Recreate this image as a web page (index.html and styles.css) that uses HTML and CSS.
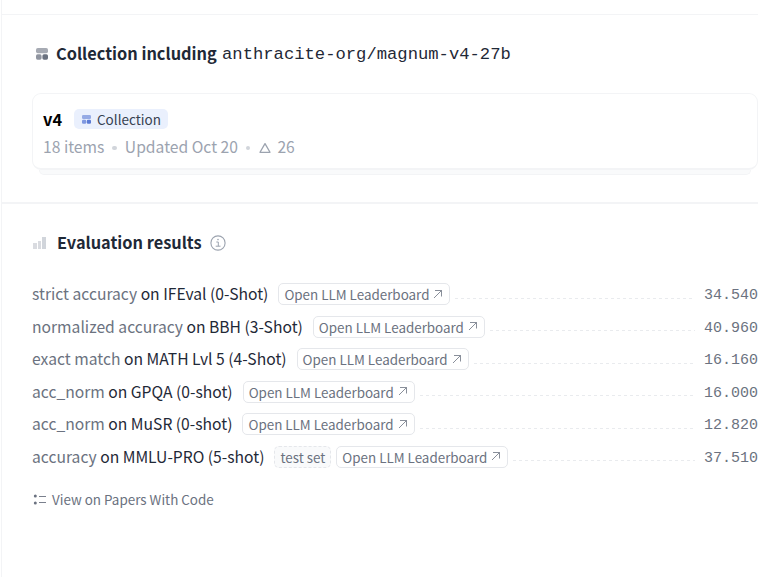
FILE: index.html
```html
<!DOCTYPE html>
<html lang="en">
<head>
    <meta charset="UTF-8">
    <meta name="viewport" content="width=device-width, initial-scale=1.0">
    <title>anthracite-org/magnum-v4-27b</title>
    <link rel="stylesheet" href="styles.css">
</head>
<body>
    <svg class="sprite" width="0" height="0">
        <symbol id="arrow" viewBox="0 0 10 10">
            <path d="M2 1.5H8.5V7.5M8.5 1.5L1 9" fill="none" stroke="currentColor" stroke-width="0.8"/>
        </symbol>
        <symbol id="collection" viewBox="0 0 12 12">
            <rect x="0" y="0" width="12" height="5.3" rx="1.8" fill="currentColor" opacity="0.6"/>
            <rect x="0" y="6.3" width="5.6" height="5.4" rx="1.6" fill="currentColor" opacity="0.75"/>
            <rect x="6.4" y="6.3" width="5.6" height="5.4" rx="1.6" fill="currentColor"/>
        </symbol>
    </svg>

    <main class="sidebar">
        <section class="collections">
            <h2>
                <svg class="icon-collection"><use href="#collection"/></svg>
                <span class="title-collection">Collection including</span>
                <span class="repo">anthracite-org/magnum-v4-27b</span>
            </h2>
            <div class="stack">
                <a class="card">
                    <div class="card-top">
                        <span class="name">v4</span>
                        <span class="tag"><svg><use href="#collection"/></svg><span>Collection</span></span>
                    </div>
                    <div class="meta">
                        <span class="items">18 items</span>
                        <span class="dot"></span>
                        <span class="updated">Updated Oct 20</span>
                        <span class="dot"></span>
                        <svg viewBox="0 0 12 12"><path d="M6 1.6L11 10.3H1Z" fill="none" stroke="currentColor" stroke-width="1.3" stroke-linejoin="round"/></svg>
                        <span>26</span>
                    </div>
                </a>
                <div class="under"></div>
            </div>
        </section>

        <section class="results">
            <h2>
                <svg class="icon-bars" viewBox="0 0 13 12"><path d="M0 6h4v6H0z" fill="#d9dbe0"/><path d="M5 4h3v8H5z" fill="#d9dbe0"/><path d="M9 0h4v12H9z" fill="#d1d5db"/></svg>
                <span class="title-results">Evaluation results</span>
                <svg class="icon-info" viewBox="0 0 16 16"><circle cx="8" cy="8" r="7.1" fill="none" stroke="#9ca3af" stroke-width="1.1"/><path d="M6.3 7h2v4.2M5.7 11.2h4.8" fill="none" stroke="#9ca3af" stroke-width="1"/><circle cx="8" cy="4.6" r="0.8" fill="#9ca3af"/></svg>
            </h2>

            <div class="row">
                <span class="metric"><span>strict accuracy</span> on IFEval (0-Shot)</span>
                <a class="source"><span>Open LLM Leaderboard</span><svg><use href="#arrow"/></svg></a>
                <i class="leader"></i>
                <span class="value">34.540</span>
            </div>
            <div class="row">
                <span class="metric"><span>normalized accuracy</span> on BBH (3-Shot)</span>
                <a class="source"><span>Open LLM Leaderboard</span><svg><use href="#arrow"/></svg></a>
                <i class="leader"></i>
                <span class="value">40.960</span>
            </div>
            <div class="row">
                <span class="metric"><span>exact match</span> on MATH Lvl 5 (4-Shot)</span>
                <a class="source"><span>Open LLM Leaderboard</span><svg><use href="#arrow"/></svg></a>
                <i class="leader"></i>
                <span class="value">16.160</span>
            </div>
            <div class="row">
                <span class="metric"><span>acc_norm</span> on GPQA (0-shot)</span>
                <a class="source"><span>Open LLM Leaderboard</span><svg><use href="#arrow"/></svg></a>
                <i class="leader"></i>
                <span class="value">16.000</span>
            </div>
            <div class="row">
                <span class="metric"><span>acc_norm</span> on MuSR (0-shot)</span>
                <a class="source"><span>Open LLM Leaderboard</span><svg><use href="#arrow"/></svg></a>
                <i class="leader"></i>
                <span class="value">12.820</span>
            </div>
            <div class="row">
                <span class="metric"><span>accuracy</span> on MMLU-PRO (5-shot)</span>
                <span class="split">test set</span>
                <a class="source"><span>Open LLM Leaderboard</span><svg><use href="#arrow"/></svg></a>
                <i class="leader"></i>
                <span class="value">37.510</span>
            </div>

            <a class="papers">
                <svg viewBox="0 0 13 11"><circle cx="2.3" cy="2" r="1.5" fill="currentColor"/><circle cx="2.3" cy="9" r="1.5" fill="currentColor"/><path d="M6 2.5h7M6 8.5h7" stroke="currentColor" stroke-width="0.9"/></svg>
                <span>View on Papers With Code</span>
            </a>
        </section>
    </main>
</body>
</html>
```

FILE: styles.css
```css
* {
    box-sizing: border-box;
}

body {
    margin: 0;
    background: #ffffff;
    color: #1f2937;
    font-family: "Noto Sans CJK SC", "Open Sans", sans-serif;
    font-size: 15.66px;
    line-height: 22px;
    overflow: hidden;
}

svg {
    display: block;
    flex-shrink: 0;
}

.sprite {
    display: none;
}

.sidebar {
    width: 757px;
    height: 577px;
    margin-left: 1px;
    padding-top: 14px;
    border-left: 1px solid #f3f4f6;
}

h2 {
    display: flex;
    align-items: center;
    height: 24px;
    margin: 0;
    font-size: 16.35px;
    font-weight: 700;
    line-height: 24px;
    white-space: nowrap;
}

/* Collections */
.collections {
    height: 188px;
    padding: 26px 0 0 30px;
    border-top: 1px solid #f3f4f6;
}

.icon-collection {
    width: 12px;
    height: 12px;
    margin: 2px 8.5px 0 3.5px;
    color: #6b7280;
}

.title-collection {
    width: 166px;
}

.repo {
    padding-top: 4px;
    font-family: "Liberation Mono", monospace;
    font-size: 17.2px;
    font-weight: 400;
}

.stack {
    margin-top: 28px;
}

.card {
    display: block;
    height: 77px;
    padding: 15px 10px 0;
    border: 1px solid #f3f4f6;
    border-bottom-width: 2px;
    border-radius: 9px;
    background: #ffffff;
}

.under {
    height: 5px;
    margin: 0 7px;
    border: 1px solid #f3f4f6;
    border-top: 0;
    border-radius: 0 0 9px 9px;
    background: #f9fafb;
}

.card-top {
    display: flex;
    align-items: center;
    height: 20px;
}

.name {
    width: 31px;
    color: #000000;
    font-size: 16.4px;
    font-weight: 700;
}

.tag {
    display: flex;
    align-items: center;
    gap: 6px;
    width: 94px;
    height: 20px;
    padding-left: 8px;
    border-radius: 5px;
    background: #eaf0fd;
    color: #374151;
    font-size: 13.5px;
}

.tag svg {
    width: 9px;
    height: 9px;
    color: #5b7bd5;
}

.meta {
    display: flex;
    align-items: center;
    height: 22px;
    margin-top: 7px;
    color: #9ca3af;
}

.meta svg {
    width: 12px;
    height: 12px;
    margin: 1px 6px 0 1px;
}

.dot {
    width: 4.5px;
    height: 4.5px;
    margin: 2px 8px 0;
    border-radius: 50%;
    background: #d1d5db;
}

/* Evaluation results */
.results {
    padding: 26px 0 0 30px;
    border-top: 2px solid #f3f4f6;
}

.results h2 {
    margin-bottom: 24px;
}

.icon-bars {
    width: 13px;
    height: 12px;
    margin: 2px 11px 0 1px;
}

.icon-info {
    width: 16px;
    height: 16px;
    margin: 1px 0 0 8px;
}

.row {
    display: flex;
    align-items: center;
    height: 32.5px;
    white-space: nowrap;
}

.metric {
    margin-right: 10px;
}

.metric span {
    color: #6b7280;
}

.source,
.split {
    display: flex;
    align-items: center;
    height: 22px;
    padding: 0 5px;
    border: 1px solid #e5e7eb;
    border-radius: 5px;
    color: #6b7280;
    font-size: 13.4px;
    line-height: 20px;
}

.source svg {
    width: 10px;
    height: 10px;
    margin: -1px 1px 0 4px;
}

.split {
    margin-right: 5px;
    border-style: dashed;
    background: #f9fafb;
}

/* dashed line between the label and the score */
.leader {
    flex: 1;
    height: 1px;
    margin: 8px 9px 0 5px;
    background: repeating-linear-gradient(90deg, #e9ebee 0 3px, transparent 3px 6px);
}

.value {
    padding-top: 4px;
    color: #6b7280;
    font-family: "Liberation Mono", monospace;
    font-size: 15px;
}

.papers {
    display: flex;
    align-items: center;
    gap: 6px;
    margin-top: 15px;
    color: #6b7280;
    font-size: 13.43px;
}

.papers svg {
    width: 13px;
    height: 11px;
    margin-left: 1px;
}
```
